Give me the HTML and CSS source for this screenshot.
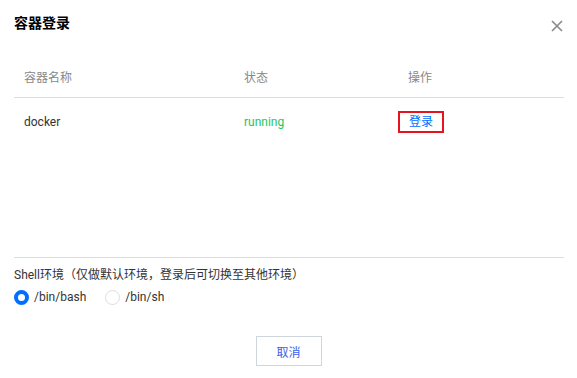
FILE: index.html
```html
<!DOCTYPE html>
<html lang="zh-CN">
  <head>
    <meta charset="UTF-8" />
    <meta name="viewport" content="width=device-width, initial-scale=1.0" />
    <title>容器登录</title>
    <link rel="stylesheet" href="styles.css">
  </head>
  <body>
    <div class="dialog">
      <div class="dialog-header">
        <h3>容器登录</h3>
        <button type="button" class="close" aria-label="关闭">
          <svg width="12" height="12" viewBox="0 0 12 12">
            <path d="M1 1 L11 11 M11 1 L1 11" stroke="#888" stroke-width="1.6" fill="none" />
          </svg>
        </button>
      </div>

      <div class="table-wrap">
        <table class="table">
          <thead>
            <tr>
              <th class="col-name">容器名称</th>
              <th class="col-status">状态</th>
              <th>操作</th>
            </tr>
          </thead>
          <tbody>
            <tr>
              <td>docker</td>
              <td class="status-running">running</td>
              <td><a href="#" class="login-link">登录</a></td>
            </tr>
          </tbody>
        </table>
      </div>

      <div class="shell">
        <p class="shell-label">Shell环境（仅做默认环境，登录后可切换至其他环境）</p>
        <div class="radio-group">
          <label class="radio">
            <input type="radio" name="shell" value="bash" checked />
            <span class="radio-mark"></span>
            /bin/bash
          </label>
          <label class="radio">
            <input type="radio" name="shell" value="sh" />
            <span class="radio-mark"></span>
            /bin/sh
          </label>
        </div>
      </div>

      <div class="dialog-footer">
        <button type="button" class="btn">取消</button>
      </div>
    </div>
  </body>
</html>
```

FILE: styles.css
```css
* {
  margin: 0;
  padding: 0;
  box-sizing: border-box;
}

body {
  font-family: Roboto, "Noto Sans CJK SC", sans-serif;
  font-size: 12px;
  color: #333;
  background: #fff;
}

.dialog {
  width: 577px;
  padding: 0 13px 0 14px;
}

.dialog-header {
  display: flex;
  justify-content: space-between;
  align-items: center;
  padding-top: 13px;
  height: 33px;
}

.dialog-header h3 {
  font-size: 14px;
  font-weight: bold;
  color: #000;
  line-height: 20px;
}

.close {
  border: none;
  background: none;
  width: 12px;
  height: 12px;
  margin-top: 6px;
  margin-right: 1px;
  display: flex;
  cursor: pointer;
}

.table-wrap {
  margin-top: 24px;
  height: 201px;
  border-bottom: 1px solid #d9dde6;
}

.table {
  width: 100%;
  border-collapse: collapse;
  table-layout: fixed;
}

.table th {
  text-align: left;
  font-weight: normal;
  color: #888;
  height: 40px;
  padding: 0 10px;
  border-bottom: 1px solid #d9dde6;
}

.table .col-name {
  width: 220px;
}

.table .col-status {
  width: 164px;
}

.table td {
  height: 50px;
  padding: 0 10px;
  color: #333;
}

.table td.status-running {
  color: #1ec55f;
}

.login-link {
  display: inline-block;
  margin-left: -10px;
  padding: 0 9px;
  line-height: 18px;
  border: 2px solid #e5141e;
  color: #006eff;
  text-decoration: none;
}

.shell {
  padding-top: 8px;
}

.shell-label {
  line-height: 18px;
  color: #333;
}

.radio-group {
  display: flex;
  margin-top: 4px;
}

.radio {
  display: flex;
  align-items: center;
  gap: 5px;
  line-height: 18px;
  margin-right: 19px;
  color: #333;
  cursor: pointer;
}

.radio input {
  display: none;
}

.radio-mark {
  width: 15px;
  height: 15px;
  border-radius: 50%;
  border: 1px solid #ddd;
  background: #fff;
}

.radio input:checked + .radio-mark {
  border: 4px solid #006eff;
}

.dialog-footer {
  display: flex;
  justify-content: center;
  margin-top: 30px;
  padding-right: 1px;
}

.btn {
  width: 66px;
  height: 30px;
  border: 1px solid #cfd5de;
  background: #fff;
  color: #3a5ee8;
  font-family: inherit;
  font-size: 12px;
  cursor: pointer;
}
```
